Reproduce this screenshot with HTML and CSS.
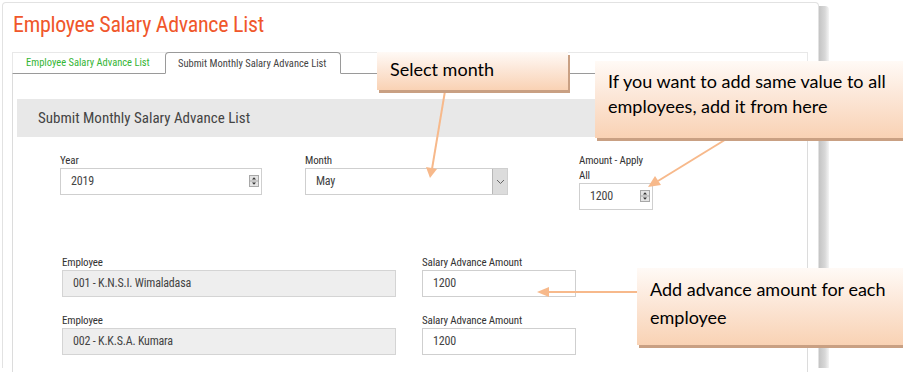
FILE: index.html
```html
<!DOCTYPE html>
<html>
<head>
<meta charset="utf-8">
<link rel="stylesheet" href="styles.css">
</head>
<body>
<div class="card">
  <h1 class="title">Employee Salary Advance List</h1>
  <div class="tabs">
    <div class="tab">Employee Salary Advance List</div>
    <div class="tab active">Submit Monthly Salary Advance List</div>
  </div>
  <div class="panel">
    <div class="band">Submit Monthly Salary Advance List</div>
    <div class="row row-top">
      <div class="field f-year">
        <label>Year</label>
        <div class="input">2019
          <svg class="spin" width="10" height="12" viewBox="0 0 10 12"><rect x="0.5" y="0.5" width="9" height="11" fill="#e4e4e4" stroke="#a8a8a8"/><line x1="1" y1="6" x2="9" y2="6" stroke="#a8a8a8"/><polygon points="3,4.5 7,4.5 5,2.2" fill="#333"/><polygon points="3,7.5 7,7.5 5,9.8" fill="#333"/></svg>
        </div>
      </div>
      <div class="field f-month">
        <label>Month</label>
        <div class="input select">May
          <span class="caret"><svg width="9" height="6" viewBox="0 0 9 6"><polyline points="1,1 4.5,4.5 8,1" fill="none" stroke="#666" stroke-width="1"/></svg></span>
        </div>
      </div>
      <div class="field f-amount">
        <label>Amount - Apply All</label>
        <div class="input">1200
          <svg class="spin" width="10" height="12" viewBox="0 0 10 12"><rect x="0.5" y="0.5" width="9" height="11" fill="#e4e4e4" stroke="#a8a8a8"/><line x1="1" y1="6" x2="9" y2="6" stroke="#a8a8a8"/><polygon points="3,4.5 7,4.5 5,2.2" fill="#333"/><polygon points="3,7.5 7,7.5 5,9.8" fill="#333"/></svg>
        </div>
      </div>
    </div>
    <div class="row row-emp first">
      <div class="field f-emp">
        <label>Employee</label>
        <div class="input ro">001 - K.N.S.I. Wimaladasa</div>
      </div>
      <div class="field f-sal">
        <label>Salary Advance Amount</label>
        <div class="input">1200</div>
      </div>
    </div>
    <div class="row row-emp">
      <div class="field f-emp">
        <label>Employee</label>
        <div class="input ro">002 - K.K.S.A. Kumara</div>
      </div>
      <div class="field f-sal">
        <label>Salary Advance Amount</label>
        <div class="input">1200</div>
      </div>
    </div>
  </div>
</div>

<svg class="arrows" width="903" height="372" viewBox="0 0 903 372">
  <g stroke="#f7b98b" stroke-width="2" fill="#f7b98b">
    <line x1="445" y1="91" x2="432" y2="169"/>
    <polygon points="430,178 426,167 437,169" stroke="none"/>
    <line x1="728" y1="138" x2="658" y2="181"/>
    <polygon points="648,187 661,185 655,176" stroke="none"/>
    <line x1="637" y1="292" x2="548" y2="292"/>
    <polygon points="537,292 549,287 549,297" stroke="none"/>
  </g>
</svg>

<div class="callout c1">Select month</div>
<div class="callout c2">If you want to add same value to all employees, add it from here</div>
<div class="callout c3">Add advance amount for each employee</div>
</body>
</html>
```

FILE: styles.css
```css
* { box-sizing: border-box; }

body {
  margin: 0;
  width: 903px;
  height: 372px;
  overflow: hidden;
  position: relative;
  background: #fff;
  font-family: Roboto, "Liberation Sans", sans-serif;
  font-stretch: 84%;
  color: #444;
}

.card {
  position: relative;
  margin: 2px 0 0 2px;
  width: 817px;
  height: 366px;
  border: 1px solid #e2e2e2;
  border-bottom: none;
  border-radius: 4px 4px 0 0;
  background: #fff;
}

.card::after {
  content: "";
  position: absolute;
  top: 3px;
  right: -11px;
  width: 10px;
  bottom: 0;
  background: linear-gradient(to right, #c4c4c4, #d8d8d8 60%, #f4f4f4);
  border-radius: 0 4px 0 0;
}

.title {
  margin: 0;
  height: 49px;
  padding: 8px 0 0 10px;
  font-size: 22px;
  font-weight: 400;
  letter-spacing: -0.3px;
  line-height: 27px;
  color: #f0572b;
  white-space: nowrap;
}

.tabs {
  display: flex;
  margin-left: 9px;
  width: 796px;
  height: 22px;
  border: 1px solid #e8e8e8;
  border-bottom: 1px solid #9a9a9a;
  font-size: 10.5px;
}

.tab {
  width: 152px;
  padding-left: 13px;
  line-height: 20px;
  color: #35b535;
  white-space: nowrap;
}

.tab.active {
  width: 176px;
  margin: -1px 0 -1px 0;
  height: 22px;
  padding-left: 12px;
  border: 1px solid #9a9a9a;
  border-bottom-color: #fff;
  border-radius: 4px 4px 0 0;
  background: #fff;
  color: #444;
  line-height: 21px;
}

.panel {
  margin-left: 9px;
  width: 796px;
  height: 300px;
  border-left: 1px solid #dcdcdc;
  border-right: 1px solid #dcdcdc;
  padding: 25px 4px 0 4px;
}

.band {
  height: 38px;
  background: #e8e8e8;
  padding-left: 21px;
  line-height: 38px;
  font-size: 15px;
  color: #444;
}

.row {
  display: flex;
  align-items: flex-start;
}

.row-top {
  margin-top: 16px;
  padding-left: 43px;
}

.row-emp {
  margin-top: 16px;
  padding-left: 45px;
}

.row-emp.first {
  margin-top: 45px;
}

.field label {
  display: block;
  font-size: 11px;
  line-height: 15px;
  letter-spacing: -0.15px;
  color: #333;
}

.input {
  position: relative;
  height: 27px;
  border: 1px solid #cfcfcf;
  background: #fff;
  padding: 0 10px;
  line-height: 25px;
  font-size: 12px;
  letter-spacing: -0.2px;
  color: #444;
  white-space: nowrap;
}

.input.ro {
  background: #eeeeee;
  border-color: #d4d4d4;
}

.spin {
  position: absolute;
  right: 2px;
  top: 6px;
}

.select .caret {
  position: absolute;
  right: 0;
  top: 0;
  bottom: 0;
  width: 15px;
  background: #dcdcdc;
  border-left: 1px solid #b8b8b8;
  display: flex;
  align-items: center;
  justify-content: center;
}

.f-year { width: 202px; margin-right: 43px; }
.f-month { width: 203px; margin-right: 71px; }
.f-amount { width: 74px; }
.f-amount label { width: 68px; }

.f-emp { width: 334px; margin-right: 26px; }
.f-sal { width: 154px; }

.arrows {
  position: absolute;
  left: 0;
  top: 0;
  pointer-events: none;
}

.callout {
  position: absolute;
  background: linear-gradient(to bottom, #fffaf6 0%, #fce7d8 45%, #f9d2b4 100%);
  box-shadow: 2px 3px 0 #c9a083;
  font-family: Lato, "Open Sans", sans-serif;
  font-stretch: normal;
  font-size: 18px;
  color: #000;
}

.c1 {
  left: 377px;
  top: 52px;
  width: 191px;
  height: 38px;
  padding: 6px 0 0 13px;
  line-height: 22px;
}

.c2 {
  left: 595px;
  top: 61px;
  width: 320px;
  height: 77px;
  padding: 8px 0 0 13px;
  line-height: 25px;
}

.c3 {
  left: 637px;
  top: 268px;
  width: 280px;
  height: 77px;
  padding: 7px 0 0 13px;
  line-height: 28px;
}
```
